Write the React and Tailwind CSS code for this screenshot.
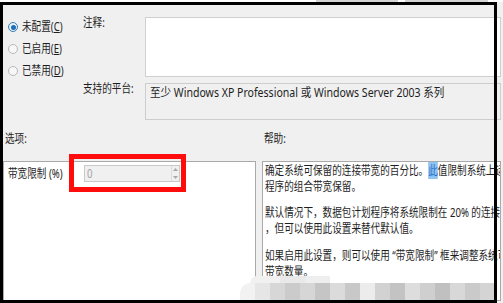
const T = ({ children, className = "" }) => (
  <span className={`inline-block origin-left scale-x-[0.8] whitespace-nowrap ${className}`}>{children}</span>
);

const Radio = ({ checked, label, hotkey }) => (
  <div className="flex h-[22px] items-center">
    <span
      className={`flex h-[10px] w-[10px] shrink-0 items-center justify-center rounded-full border ${
        checked ? "border-[#3c7fb1] bg-[#e3f1fb]" : "border-[#b9b9b9] bg-[#f7f7f7]"
      }`}
    >
      {checked && <span className="h-[5px] w-[5px] rounded-full bg-[#1f6fb8]" />}
    </span>
    <T className="ml-[4px]">
      {label}(<span className="underline">{hotkey}</span>)
    </T>
  </div>
);

const mosaic = [
  "#f2f2f2", "#e6e6e6", "#d7d7d7", "#cbcbcb", "#d6d6d6", "#c5c5c5", "#dbdbdb", "#c8c8c8",
  "#ececec", "#d2d2d2", "#c3c3c3", "#dddddd", "#cfcfcf", "#c0c0c0", "#d8d8d8", "#cacaca", "#d4d4d4",
];

export default function App() {
  return (
    <div className="relative h-[303px] w-[503px] overflow-hidden bg-[#f0f0f0] font-['Noto_Sans','Noto_Sans_CJK_SC',sans-serif] text-[12px] leading-[16px] text-[#1e1e1e]">
      {/* strip above the dialog */}
      <div className="flex h-[2px] bg-white">
        <div className="ml-[316px] w-[82px] bg-[#d4d4d4]" />
        <div className="ml-[7px] w-[83px] bg-[#d4d4d4]" />
      </div>

      {/* state + comment + platform */}
      <div className="flex h-[126px]">
        <div className="w-[83px] pl-[8px] pt-[14px]">
          <Radio checked label="未配置" hotkey="C" />
          <Radio label="已启用" hotkey="E" />
          <Radio label="已禁用" hotkey="D" />
        </div>
        <div className="grid flex-1 grid-cols-[62px_1fr] grid-rows-[60px_37px] gap-y-[6px] pr-[2px] pt-[15px]">
          <div className="leading-[12px]">
            <T>注释:</T>
          </div>
          <div className="border border-[#cfcfcf] bg-white" />
          <div className="leading-[12px]">
            <T>支持的平台:</T>
          </div>
          <div className="border border-[#cdcdcd] bg-[#f0f0f0] pl-[4px] pt-[2px] leading-[14px]">
            <span className="inline-block origin-left scale-x-[0.88] whitespace-nowrap">
              至少 Windows XP Professional 或 Windows Server 2003 系列
            </span>
          </div>
        </div>
      </div>

      {/* section titles */}
      <div className="flex h-[33px] pt-[5px] leading-[12px]">
        <div className="w-[264px] pl-[5px]">
          <T>选项:</T>
        </div>
        <T>帮助:</T>
      </div>

      {/* panels */}
      <div className="flex h-[140px] gap-[6px] pl-[3px] pr-[2px]">
        <div className="w-[253px] border border-[#a9a9a9] bg-white pl-[4px] pt-[3px]">
          <div className="flex items-center">
            <div className="w-[76px]">
              <T>带宽限制 (%)</T>
            </div>
            <div className="relative flex h-[17px] w-[96px] items-center border border-[#c9c9c9] bg-[#f0f0f0]">
              <T className="ml-[2px] text-[#a3a3a3]">0</T>
              <div className="ml-auto flex h-full w-[8px] flex-col items-center justify-around border-l border-[#dcdcdc]">
                <svg width="5" height="3" viewBox="0 0 5 3">
                  <path d="M0 3 L2.5 0 L5 3 Z" fill="#a8a8a8" />
                </svg>
                <svg width="5" height="3" viewBox="0 0 5 3">
                  <path d="M0 0 L2.5 3 L5 0 Z" fill="#a8a8a8" />
                </svg>
              </div>
              <div className="pointer-events-none absolute -left-[16px] -top-[12px] h-[38px] w-[117px] border-[5px] border-[#ff0d0d]" />
            </div>
          </div>
        </div>

        <div className="flex-1 overflow-hidden border border-[#a9a9a9] bg-white pl-[2px] pt-[1px]">
          <div>
            <T>
              确定系统可保留的连接带宽的百分比。
              <span className="bg-[#8fc3f2] text-[#2a6fc9]">此</span>
              值限制系统上运行的所有
            </T>
          </div>
          <div>
            <T>程序的组合带宽保留。</T>
          </div>
          <div className="mt-[10px]">
            <T>默认情况下，数据包计划程序将系统限制在 20% 的连接带宽</T>
          </div>
          <div>
            <T>，但可以使用此设置来替代默认值。</T>
          </div>
          <div className="mt-[11px]">
            <T>如果启用此设置，则可以使用 “带宽限制” 框来调整系统可保留的</T>
          </div>
          <div>
            <T>带宽数量。</T>
          </div>
        </div>
      </div>

      {/* pixelated blur at the bottom */}
      <div className="pointer-events-none absolute left-[250px] top-[276px] flex h-[7px] w-[80px] overflow-hidden rounded-tl-[8px]">
        <div className="w-[30px] bg-[#f1f1f1]" />
        <div className="w-[25px] bg-[#e9e9e9]" />
        <div className="w-[25px] bg-[#eeeeee]" />
      </div>
      <div className="pointer-events-none absolute left-[240px] top-[283px] flex h-[18px] w-[254px] overflow-hidden rounded-tl-[10px]">
        {mosaic.map((c, i) => (
          <div key={i} className="h-full w-[15px] shrink-0" style={{ backgroundColor: c }} />
        ))}
      </div>

      {/* black annotation frame */}
      <div className="pointer-events-none absolute left-0 top-[2px] h-[301px] w-[497px] border-[3px] border-black" />
    </div>
  );
}
